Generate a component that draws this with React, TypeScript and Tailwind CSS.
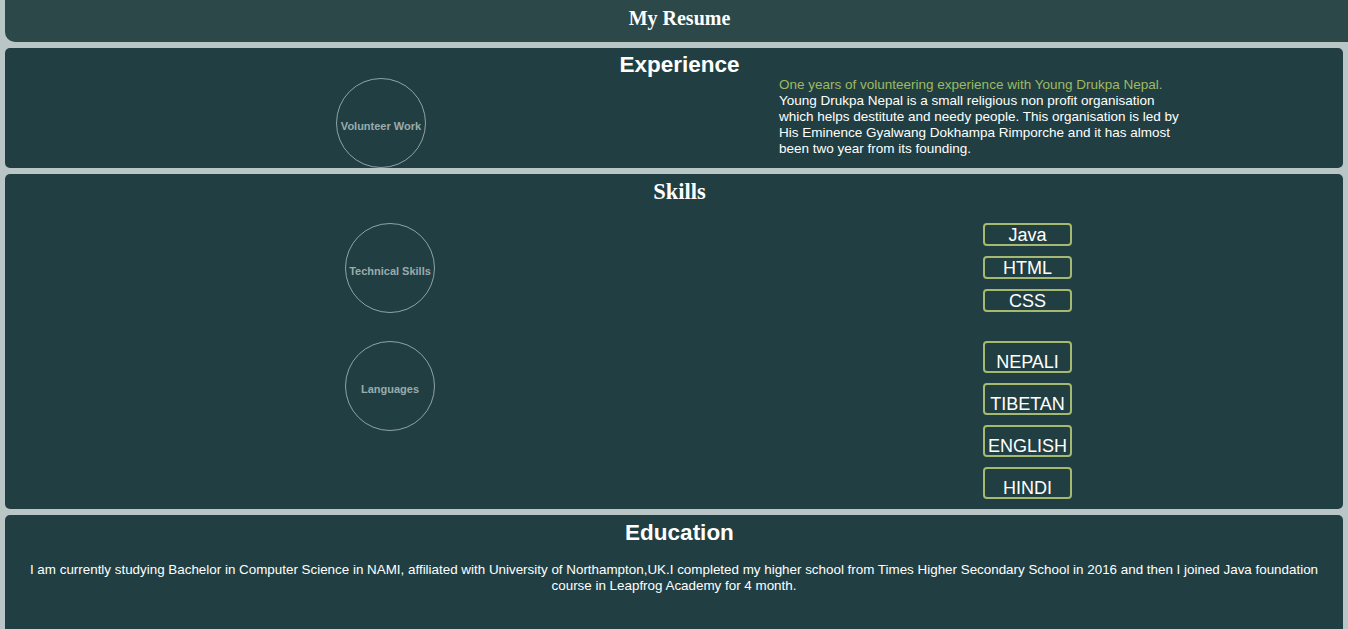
const circle =
  "flex h-[90px] w-[90px] shrink-0 items-center justify-center rounded-full border border-[#8fa4a4] pt-[6px] text-center text-[11px] font-bold text-[#9aabab]";

function Circle({ label }: { label: string }) {
  return <div className={circle}>{label}</div>;
}

function TechBadge({ label }: { label: string }) {
  return (
    <div className="h-[23px] w-[89px] rounded-[4px] border-2 border-[#a6b971] pt-[1px] text-center text-[18px] leading-[19px] text-white">
      {label}
    </div>
  );
}

function LangBadge({ label }: { label: string }) {
  return (
    <div className="h-[32px] w-[89px] rounded-[4px] border-2 border-[#a6b971] pt-[9px] text-center text-[18px] leading-[20px] text-white">
      {label}
    </div>
  );
}

export default function App() {
  return (
    <div className="flex min-h-screen flex-col gap-[6px] overflow-hidden bg-[#bac6c6] font-['Liberation_Sans',Arial,sans-serif]">
      <header className="ml-[5px] flex h-[42px] items-center justify-center rounded-bl-[10px] bg-[#2c4848] pb-[6px] pl-[6px]">
        <h1 className="font-['Liberation_Serif',serif] text-[20px] font-bold text-white">My Resume</h1>
      </header>

      <section className="mx-[5px] h-[120px] rounded-[5px] bg-[#213f43] pt-[3px]">
        <h2 className="pl-[11px] text-center text-[22.5px] font-bold leading-[27px] text-white">Experience</h2>
        <div className="flex">
          <div className="ml-[331px]">
            <Circle label="Volunteer Work" />
          </div>
          <div className="ml-[353px] -mt-[1px] w-[405px] text-[13.5px] leading-[16px] text-white">
            <p className="text-[#9fb962]">One years of volunteering experience with Young Drukpa Nepal.</p>
            <p>
              Young Drukpa Nepal is a small religious non profit organisation which helps destitute and needy
              people. This organisation is led by His Eminence Gyalwang Dokhampa Rimporche and it has almost been
              two year from its founding.
            </p>
          </div>
        </div>
      </section>

      <section className="mx-[5px] h-[335px] rounded-[5px] bg-[#213f43] pt-[5px]">
        <h2 className="pl-[11px] text-center font-['Liberation_Serif',serif] text-[22.5px] font-bold leading-[26px] text-white">
          Skills
        </h2>
        <div className="mt-[18px] flex">
          <div className="ml-[340px]">
            <Circle label="Technical Skills" />
          </div>
          <div className="ml-[548px] flex flex-col gap-[10px]">
            <TechBadge label="Java" />
            <TechBadge label="HTML" />
            <TechBadge label="CSS" />
          </div>
        </div>
        <div className="mt-[28px] flex">
          <div className="ml-[340px]">
            <Circle label="Languages" />
          </div>
          <div className="ml-[548px] flex flex-col gap-[10px]">
            <LangBadge label="NEPALI" />
            <LangBadge label="TIBETAN" />
            <LangBadge label="ENGLISH" />
            <LangBadge label="HINDI" />
          </div>
        </div>
      </section>

      <section className="mx-[5px] h-[160px] rounded-[5px] bg-[#213f43] px-[20px] pt-[4px]">
        <h2 className="pl-[11px] text-center text-[22.5px] font-bold leading-[27px] text-white">Education</h2>
        <p className="mt-[16px] text-center text-[13.4px] leading-[16px] text-white">
          I am currently studying Bachelor in Computer Science in NAMI, affiliated with University of
          Northampton,UK.I completed my higher school from Times Higher Secondary School in 2016 and then I joined
          Java foundation course in Leapfrog Academy for 4 month.
        </p>
      </section>
    </div>
  );
}
